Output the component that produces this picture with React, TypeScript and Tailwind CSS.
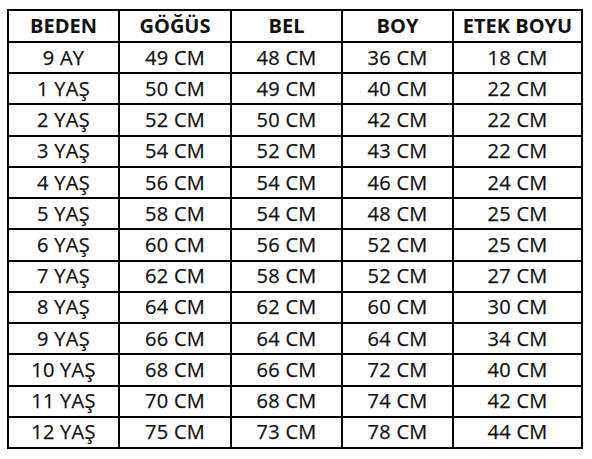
import React from "react";

const headers = ["BEDEN", "GÖĞÜS", "BEL", "BOY", "ETEK BOYU"];

const rows: string[][] = [
  ["9 AY", "49 CM", "48 CM", "36 CM", "18 CM"],
  ["1 YAŞ", "50 CM", "49 CM", "40 CM", "22 CM"],
  ["2 YAŞ", "52 CM", "50 CM", "42 CM", "22 CM"],
  ["3 YAŞ", "54 CM", "52 CM", "43 CM", "22 CM"],
  ["4 YAŞ", "56 CM", "54 CM", "46 CM", "24 CM"],
  ["5 YAŞ", "58 CM", "54 CM", "48 CM", "25 CM"],
  ["6 YAŞ", "60 CM", "56 CM", "52 CM", "25 CM"],
  ["7 YAŞ", "62 CM", "58 CM", "52 CM", "27 CM"],
  ["8 YAŞ", "64 CM", "62 CM", "60 CM", "30 CM"],
  ["9 YAŞ", "66 CM", "64 CM", "64 CM", "34 CM"],
  ["10 YAŞ", "68 CM", "66 CM", "72 CM", "40 CM"],
  ["11 YAŞ", "70 CM", "68 CM", "74 CM", "42 CM"],
  ["12 YAŞ", "75 CM", "73 CM", "78 CM", "44 CM"],
];

const App = () => {
  return (
    <div className="w-[592px] h-[459px] bg-white pl-[7px] pt-[9px] font-['Open_Sans',sans-serif] text-[#111]">
      <div className="grid h-[440px] w-[576px] grid-cols-[109px_110px_109px_109px_127px] grid-rows-[30px_repeat(13,1fr)] gap-[2px] bg-black p-[2px]">
        {headers.map((h) => (
          <div
            key={h}
            className="flex items-center justify-center bg-white text-[20px] font-bold leading-none"
          >
            {h}
          </div>
        ))}
        {rows.map((row, i) =>
          row.map((cell, j) => (
            <div
              key={`${i}-${j}`}
              className="flex items-center justify-center bg-white text-[20px] leading-none tracking-[0.3px] [-webkit-text-stroke:0.25px_#111]"
            >
              {cell}
            </div>
          ))
        )}
      </div>
    </div>
  );
};

export default App;
